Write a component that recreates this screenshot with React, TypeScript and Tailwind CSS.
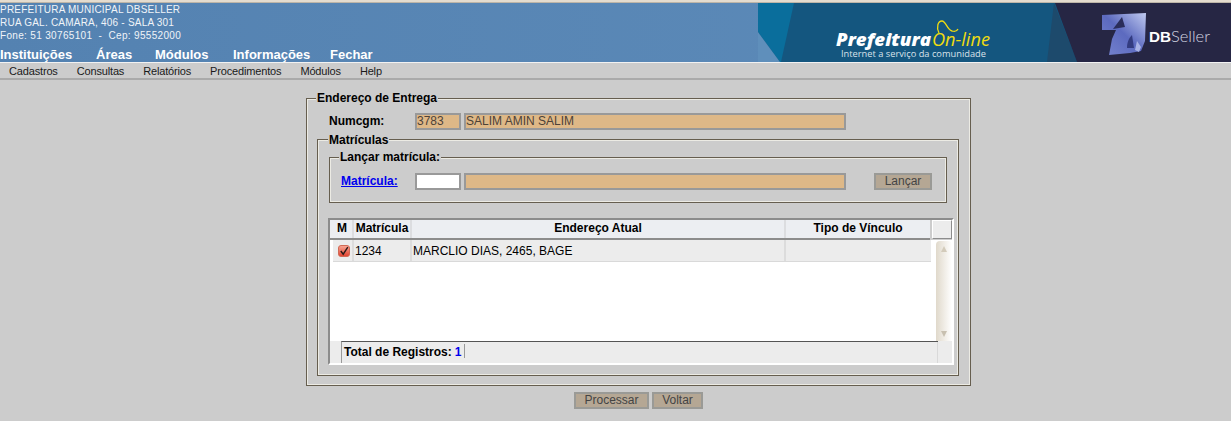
import React from "react";

const TOP_MENU = ["Instituições", "Áreas", "Módulos", "Informações", "Fechar"];
const SUB_MENU = ["Cadastros", "Consultas", "Relatórios", "Procedimentos", "Módulos", "Help"];

const groove = "min-w-0 border border-[#665e4f] shadow-[inset_0_0_0_1px_#ecebe4]";
const field = "h-[17px] border-2 border-[#999999] px-0 text-[12px] leading-[13px] text-[#4d4238]";
const btn = "h-[17px] border-2 border-[#9a9a96] bg-[#b5a794] text-[12px] leading-[13px] text-[#444444]";

function HeaderArt() {
  return (
    <svg width="473" height="59" viewBox="0 0 473 59" className="shrink-0 block">
      <rect width="473" height="59" fill="#14567f" />
      <polygon points="0,0 36,0 23,59 22,59 0,29" fill="#0a6e9c" />
      <polygon points="0,29 22,59 0,59" fill="#5f8fbb" />
      <polygon points="296,0 319,59 289,59" fill="#1d4a6c" />
      <polygon points="297,0 473,0 473,59 319,59" fill="#262644" />
      <text x="78" y="43" fontFamily="Open Sans" fontWeight="800" fontStyle="italic" fontSize="18" fill="#ffffff" textLength="95" lengthAdjust="spacingAndGlyphs">Prefeitura</text>
      <text x="174" y="43" fontFamily="Open Sans" fontWeight="400" fontStyle="italic" fontSize="19" fill="#f0dc10" textLength="58" lengthAdjust="spacingAndGlyphs">On-line</text>
      <path d="M181 30c-3-6-1-12 3-12 4 0 5 9 10 10 3 1 5 0 6-2" fill="none" stroke="#f0dc10" strokeWidth="1.3" />
      <text x="83" y="54" fontFamily="Open Sans" fontSize="9" fill="#d9e2ea" textLength="145" lengthAdjust="spacingAndGlyphs">Internet a serviço da comunidade</text>
      <defs>
        <linearGradient id="dbMark" x1="1" y1="0" x2="0" y2="1">
          <stop offset="0" stopColor="#c0caf0" />
          <stop offset="0.5" stopColor="#5c6abf" />
          <stop offset="1" stopColor="#7684cf" />
        </linearGradient>
      </defs>
      <path d="M344 12l44-2-1 28-4 10-11 2-21 2 3-16 4-9-14 0z" fill="url(#dbMark)" />
      <polygon points="364,14 367,24 355,26" fill="#2a2d5a" />
      <path d="M369 45c0-6 2-10 5-13l2 13z" fill="#333c80" />
      <path d="M377 47l2-9 4 6-2 5z" fill="#a9b3e6" />
      <text x="391" y="39" fontFamily="Liberation Sans" fontWeight="700" fontSize="15" fill="#ffffff" textLength="22" lengthAdjust="spacingAndGlyphs">DB</text>
      <text x="413" y="39" fontFamily="Lato" fontWeight="300" fontSize="15" fill="#d5d6e2" textLength="39" lengthAdjust="spacingAndGlyphs">Seller</text>
    </svg>
  );
}

function CheckedBox() {
  return (
    <svg width="12" height="12" viewBox="0 0 12 12" className="block">
      <defs>
        <linearGradient id="checkRed" x1="0" y1="0" x2="0" y2="1">
          <stop offset="0" stopColor="#f8a896" />
          <stop offset="1" stopColor="#e2402c" />
        </linearGradient>
      </defs>
      <rect x="0.5" y="0.5" width="11" height="11" rx="2.5" fill="url(#checkRed)" stroke="#d06a55" />
      <path d="M2.8 6l2.4 3.2L9.8 2.2" fill="none" stroke="#2a1a18" strokeWidth="1.4" />
    </svg>
  );
}

export default function App() {
  return (
    <div className="h-[421px] w-[1231px] overflow-hidden bg-[#cccccc] font-['Liberation_Sans',Arial,sans-serif] text-[12px] text-black">
      {/* TOPO */}
      <div className="h-[3px] bg-[#e4dccf] border-b border-[#bdb5a8]" />
      <div className="flex h-[59px] bg-gradient-to-r from-[#5482b1] to-[#5e8cba]">
        <div className="flex-1 flex flex-col text-white">
          <div className="text-[10px] leading-[13px] tracking-[0.22px] text-[#f0f4f8] whitespace-pre">
            <div>PREFEITURA MUNICIPAL DBSELLER</div>
            <div>RUA GAL. CAMARA, 406 - SALA 301</div>
            <div className="tracking-[0.33px]">Fone: 51 30765101  -  Cep: 95552000</div>
          </div>
          <div className="mt-auto flex h-[14px] text-[13px] leading-[14px] font-bold">
            {TOP_MENU.map((m, i) => (
              <span key={m} className={["w-[96px]", "w-[59px]", "w-[78px]", "w-[97px]", ""][i]}>
                {m}
              </span>
            ))}
          </div>
        </div>
        <HeaderArt />
      </div>

      {/* MENU */}
      <div className="flex h-[18px] gap-[19px] border-t border-[#f2f2f2] border-b-2 border-b-[#aaaaaa] pl-[9px] text-[11px] leading-[17px] tracking-[-0.16px] text-[#1a1a1a]">
        {SUB_MENU.map((m) => (
          <span key={m}>{m}</span>
        ))}
      </div>

      {/* FORMULARIO */}
      <div className="ml-[306px] w-[665px]">
        <fieldset className={`mt-[11px] w-[665px] h-[295px] px-[9px] ${groove}`}>
          <legend className="bg-[#cccccc] px-[1px] font-bold leading-[14px]">Endereço de Entrega</legend>
          <div className="flex items-center mt-[7px] pl-[13px]">
            <span className="w-[86px] font-bold">Numcgm:</span>
            <input readOnly value="3783" className={`w-[46px] bg-[#deb887] ${field}`} />
            <input readOnly value="SALIM AMIN SALIM" className={`ml-[3px] w-[382px] bg-[#deb887] ${field}`} />
          </div>

          <fieldset className={`mt-[2px] ml-[1px] h-[244px] w-[642px] px-[11px] ${groove}`}>
            <legend className="-ml-px bg-[#cccccc] px-[1px] pt-px font-bold leading-[14px]">Matrículas</legend>

            <fieldset className={`mt-[3px] h-[53px] w-[618px] px-[10px] ${groove}`}>
              <legend className="-ml-px bg-[#cccccc] px-[1px] font-bold leading-[14px]">Lançar matrícula:</legend>
              <div className="flex items-center mt-[8px] pl-[1px]">
                <a className="w-[74px] font-bold text-[#0000ee] underline">Matrícula:</a>
                <input readOnly value="" className={`w-[46px] bg-white ${field}`} />
                <input readOnly value="" className={`ml-[3px] w-[382px] bg-[#deb887] ${field}`} />
                <button className={`ml-[28px] w-[58px] ${btn}`}>Lançar</button>
              </div>
            </fieldset>

            {/* GRID */}
            <div className="mt-[15px] h-[147px] w-[626px] -ml-[1px] border-2 border-[#8c8c8c] border-r-white border-b-white flex flex-col">
              <div className="flex h-[20px] font-bold">
                <div className="flex w-[600px] h-[20px] border-b-2 border-[#8c8c8c] bg-[#eceef2] leading-[17px] text-center">
                  <span className="w-[24px] border-r-2 border-[#dcdde0] pl-[2px]">M</span>
                  <span className="w-[58px] border-r-2 border-[#dcdde0]">Matrícula</span>
                  <span className="w-[374px] border-r-2 border-[#dcdde0]">Endereço Atual</span>
                  <span className="flex-1">Tipo de Vínculo</span>
                </div>
                <div className="ml-[2px] w-[20px] h-[19px] bg-[#ececec] border border-white border-r-[#8c8c8c] border-b-[#8c8c8c]" />
              </div>

              <div className="flex h-[101px] bg-white">
                <div className="ml-[3px] w-[598px] h-[22px] flex bg-[#ececec] border-b border-[#d9d9d9] leading-[22px]">
                  <span className="w-[21px] border-r-2 border-[#dcdcdc] pl-[5px] pt-[5px]">
                    <CheckedBox />
                  </span>
                  <span className="w-[58px] border-r-2 border-[#dcdcdc] pl-[1px]">1234</span>
                  <span className="w-[374px] border-r-2 border-[#dcdcdc] pl-[1px]">MARCLIO DIAS, 2465, BAGE</span>
                  <span className="flex-1" />
                </div>
                <div className="ml-[5px] mt-[1px] w-[16px] h-[100px] rounded-t-[4px] bg-gradient-to-r from-[#e0d9cb] to-white flex flex-col items-center justify-between pt-[5px] pb-[4px]">
                  <svg width="6" height="6" viewBox="0 0 6 6"><polygon points="3,0 6,6 0,6" fill="#d3cbbb" /></svg>
                  <svg width="6" height="6" viewBox="0 0 6 6"><polygon points="0,0 6,0 3,6" fill="#c8c0b0" /></svg>
                </div>
              </div>

              <div className="flex flex-1 bg-[#ececec]">
                <div className="ml-[11px] flex-1 flex border-t border-l border-[#555555] border-l-[#999999] pl-[2px] pt-[2px] font-bold leading-[16px] mr-[14px] relative">
                  <span>Total de Registros:</span>
                  <span className="ml-[3px] text-[#0000ee]">1</span>
                  <span className="ml-[3px] h-[14px] w-px bg-[#999999]" />
                  <span className="absolute right-0 top-0 h-full w-px bg-[#d9d9d9]" />
                </div>
              </div>
            </div>
          </fieldset>
        </fieldset>

        {/* BOTOES */}
        <div className="mt-[6px] ml-[268px] flex gap-[3px]">
          <button className={`w-[75px] ${btn}`}>Processar</button>
          <button className={`w-[51px] ${btn}`}>Voltar</button>
        </div>
      </div>
    </div>
  );
}
